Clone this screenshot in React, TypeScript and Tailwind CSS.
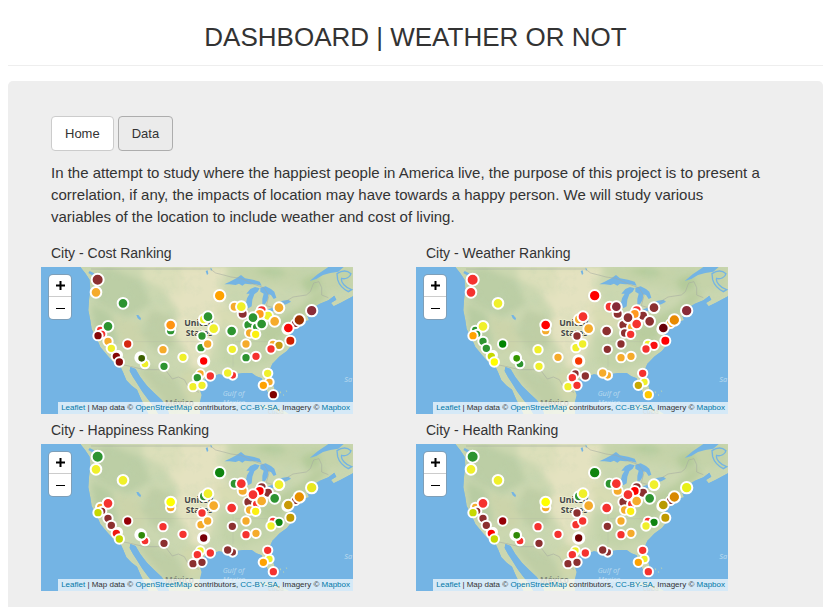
import React from "react";

type City = { x: number; y: number; r: number; c: [string, string, string, string] };

const M = "#8c3030";
const D = "#850808";
const R = "#f5322f";
const RR = "#ff0000";
const O = "#f5ab2b";
const OO = "#ffa200";
const Y = "#f0f02a";
const YG = "#c6d800";
const G = "#2d9430";

const city = (x: number, y: number, r: number, a: string, b: string, c: string, d: string): City => ({
  x,
  y,
  r,
  c: [a, b, c, d],
});

// One entry per city; the four colours are cost, weather, happiness and health.
const cities: City[] = [
  city(170, 38, 15, M, R, G, G),
  city(165, 76, 13, O, R, Y, Y),
  city(246, 109, 13, G, Y, Y, Y),
  city(178, 189, 10, R, G, O, O),
  city(183, 201, 10, R, G, M, M),
  city(201, 178, 13, G, Y, R, R),
  city(171, 206, 11, D, OO, YG, YG),
  city(201, 223, 11, O, G, M, M),
  city(211, 244, 11, Y, G, M, M),
  city(260, 231, 11, "#d62810", "#008400", "#960008", "#960008"),
  city(231, 264, 9, "#f8c8c8", "#dce89a", "#f8dcc8", "#f8b8b8"),
  city(226, 268, 11, D, YG, "#f01810", RR),
  city(235, 285, 11, D, "#ffff00", YG, YG),
  city(312, 291, 10, Y, G, R, R),
  city(299, 272, 13, "#ffffff", "#ffffff", "#ffffff", "#ffffff"),
  city(302, 274, 10, "#3c6000", "#359800", "#308a08", "#308a08"),
  city(389, 191, 11, G, O, O, O),
  city(389, 174, 13, "#ff9412", RR, "#ffff00", "#ffff00"),
  city(366, 248, 11, O, Y, R, R),
  city(369, 298, 11, G, Y, M, M),
  city(426, 271, 11, Y, O, R, R),
  city(536, 86, 14, OO, RR, "#108410", "#108410"),
  city(581, 119, 12, O, R, G, G),
  city(605, 140, 12, M, M, O, O),
  city(601, 119, 13, Y, "#862838", R, R),
  city(662, 130, 12, R, R, M, M),
  city(681, 146, 12, Y, M, M, M),
  city(656, 141, 12, "#ff9a20", "#ff9a20", RR, RR),
  city(714, 122, 13, O, M, Y, Y),
  city(701, 163, 13, O, M, G, G),
  city(812, 131, 14, "#8a2c38", "#8a2c38", "#e8e820", "#e8f018"),
  city(763, 170, 10, M, O, M, M),
  city(775, 159, 14, "#993000", "#e88a00", "#e89000", "#d88800"),
  city(738, 187, 11, "#f4c8cc", "#e8b8c0", "#a8d098", "#a8d098"),
  city(742, 183, 13, "#f80808", "#680008", "#c89a08", "#b89a00"),
  city(748, 221, 12, "#d02000", RR, "#c09a00", "#c09a00"),
  city(696, 231, 10, O, Y, R, R),
  city(714, 235, 11, "#c89a10", "#fa1010", "#108410", "#108410"),
  city(690, 246, 11, R, R, Y, Y),
  city(572, 192, 13, G, M, R, R),
  city(622, 174, 12, G, M, M, M),
  city(646, 180, 10, G, O, R, R),
  city(636, 152, 13, G, M, R, R),
  city(662, 171, 13, G, R, O, O),
  city(626, 198, 11, O, M, O, O),
  city(644, 202, 11, "#fcf010", R, "#fcf010", "#fcf010"),
  city(615, 231, 11, O, M, O, O),
  city(574, 247, 11, Y, M, M, M),
  city(615, 272, 11, G, O, R, R),
  city(645, 268, 11, R, O, O, O),
  city(489, 157, 12, Y, O, G, G),
  city(501, 149, 13, G, R, Y, Y),
  city(518, 185, 13, Y, O, O, O),
  city(483, 207, 11, G, M, R, M),
  city(480, 242, 11, G, Y, O, R),
  city(500, 231, 11, O, Y, O, R),
  city(488, 282, 14, "#ffffff", "#ffffff", "#ffffff", "#ffffff"),
  city(488, 282, 11, RR, "#f83800", "#780008", "#700000"),
  city(478, 320, 10, O, M, Y, Y),
  city(469, 332, 11, G, R, R, R),
  city(456, 359, 11, Y, Y, M, M),
  city(483, 355, 11, Y, R, M, M),
  city(508, 327, 11, R, M, R, R),
  city(575, 325, 10, R, O, M, M),
  city(560, 318, 11, Y, O, M, M),
  city(680, 319, 11, Y, R, R, R),
  city(685, 345, 10, O, Y, Y, Y),
  city(667, 355, 11, OO, "#c8a800", OO, OO),
  city(697, 383, 11, "#800000", "#ffc800", R, R),
];

const LAND =
  "M118 0 L134 20 L146 38 L148 66 L144 100 L142 130 L148 160 L152 186 L166 212 L178 240 L196 262 L216 284 L236 294 L246 316 L256 340 L272 356 L288 368 L300 396 L312 420 L322 441 L352 441 L340 420 L322 398 L304 374 L290 352 L276 330 L266 312 L268 300 L284 306 L298 330 L318 356 L340 378 L362 398 L378 420 L384 441 L478 441 L476 410 L482 384 L474 362 L486 340 L510 330 L534 322 L556 326 L574 338 L592 332 L582 322 L606 318 L632 318 L646 328 L662 334 L668 352 L680 376 L694 394 L702 386 L700 362 L688 336 L684 314 L694 290 L716 268 L738 252 L750 236 L744 214 L748 198 L762 178 L782 166 L804 160 L798 144 L814 124 L836 110 L862 100 L880 86 L886 98 L870 108 L878 118 L898 108 L936 88 L936 0 Z";

function BaseMap() {
  return (
    <g>
      <rect width="936" height="441" fill="#74b4e4" />
      <g clipPath="url(#land)">
        <path d={LAND} fill="#cbd7b0" />
        <g filter="url(#soft)">
          <path d="M390 0 L560 0 L540 60 L560 120 L530 190 L510 250 L490 310 L450 300 L430 240 L400 200 L410 130 L370 70 Z" fill="#e4e2c0" />
          <path d="M300 0 H420 V90 L360 60 L310 40 Z" fill="#dcdfba" />
          <path d="M150 20 L200 0 L300 40 L330 110 L260 150 L190 120 L160 100 Z" fill="#bccea5" />
          <path d="M150 110 L210 140 L230 230 L200 240 L160 190 Z" fill="#b8cca2" />
          <path d="M330 130 L400 150 L400 240 L350 260 L300 200 Z" fill="#bfcea5" />
          <path d="M220 150 L300 170 L310 250 L250 250 Z" fill="#ccd4aa" />
          <path d="M330 300 L400 330 L440 400 L400 441 L340 370 L290 310 Z" fill="#bfcea5" />
          <path d="M540 210 L640 200 L740 210 L700 280 L600 310 L540 290 Z" fill="#c3d3a9" />
          <path d="M640 190 L720 150 L780 120 L840 60 L860 90 L760 170 L690 240 Z" fill="#bacd9f" />
          <path d="M560 0 L936 0 L936 60 L820 80 L740 60 L600 50 Z" fill="#c5d3a9" />
          <path d="M520 110 L620 150 L610 190 L540 190 Z" fill="#d8dcb3" />
          <path d="M420 320 L470 300 L480 390 L440 400 Z" fill="#d0d7ab" />
          <path d="M630 10 L700 30 L740 20 L700 0 Z M780 40 L830 20 L840 60 L800 80 Z" fill="#b3cb9a" />
        </g>
        <rect width="936" height="441" filter="url(#relief)" opacity="0.22" />
      </g>
      <g fill="#74b4e4">
        <path d="M550 52 L566 44 L586 34 L600 24 L612 34 L636 38 L656 44 L662 56 L644 52 L628 52 L612 50 L604 56 L594 50 L584 54 L566 52 Z" />
        <path d="M628 66 L642 60 L656 64 L650 74 L640 82 L634 98 L632 118 L622 124 L614 112 L618 94 L626 80 L616 80 Z" />
        <path d="M658 62 L674 58 L690 66 L700 74 L706 92 L698 96 L690 84 L682 82 L680 98 L672 112 L664 112 L664 96 L668 80 L658 74 Z" />
        <path d="M666 136 L684 126 L706 118 L718 112 L712 124 L692 134 L676 142 Z" />
        <path d="M708 112 L722 102 L742 98 L750 104 L736 112 L718 116 Z" />
        <path d="M286 144 L292 144 L300 154 L298 160 L290 154 Z" />
        <path d="M146 12 L158 18 L166 30 L160 34 L152 24 L142 18 Z" />
        <path d="M806 42 L830 22 L850 8 L862 0 L908 0 L892 14 L868 18 L846 24 L826 36 Z" />
        <path d="M494 12 L500 10 L502 20 L498 24 Z M508 2 L514 6 L510 12 Z" />
      </g>
      <path
        d="M888 20 C900 12 916 8 930 20 C928 30 914 38 902 34 C898 46 914 62 932 68 L922 74 C906 66 894 52 890 38 Z"
        fill="#c2d3a8"
        stroke="#74b4e4"
        strokeWidth="4"
      />
      <g fill="none" stroke="#a5a9a0" strokeWidth="2" opacity="0.8">
        <path d="M150 6 H508 L524 18 L548 24 L570 30 L600 34 L640 52 L668 62 L684 86 L676 116 L704 124 L740 100 L756 90 L796 84 L808 74 L818 48 L834 44 L842 62 L842 84 L862 92" />
        <path d="M238 292 L268 298 L310 308 H350 L374 310 L394 336 L412 330 L430 338 L444 364 L474 376" />
        <path d="M280 224 H480 M576 200 V300 M582 224 H740" opacity="0.35" />
      </g>
      <g fill="#b9d3b3">
        <path d="M716 372 l5 3 -3 5z M726 380 l4 5 -3 2z M734 370 l5 2 -2 4z" />
        <path d="M640 426 L664 414 L696 416 L730 432 L744 441 H718 L694 428 L666 424 Z" />
      </g>
      <g fontFamily='"Noto Sans", "Open Sans", sans-serif'>
        <g fontWeight="700" fontSize="26" fill="#44464a" stroke="#eceecf" strokeWidth="4" paintOrder="stroke">
          <text x="430" y="177">United</text>
          <text x="434" y="206">States</text>
        </g>
        <text x="372" y="418" fontSize="25" fill="#7d867a" fontWeight="600">México</text>
        <g fontSize="22" fontStyle="italic" fill="#b6d8ee">
          <text x="545" y="386">Gulf of</text>
          <text x="545" y="413">Mexico</text>
          <text x="910" y="344">Sa</text>
        </g>
        <text x="680" y="440" fontSize="20" fill="#7f9192">Cuba</text>
      </g>
    </g>
  );
}

function RankingMap({ title, layer }: { title: string; layer: number }) {
  return (
    <section className="pb-1.5">
      <h2 className="pl-[10px] text-sm leading-5">{title}</h2>
      <div className="relative mt-1 w-[312px] overflow-hidden">
        <svg viewBox="0 0 936 441" className="block w-full" role="img" aria-label={title}>
          <defs>
            <clipPath id="land">
              <path d={LAND} />
            </clipPath>
            <filter id="soft">
              <feGaussianBlur stdDeviation="10" />
            </filter>
            <filter id="relief" x="0" y="0" width="100%" height="100%">
              <feTurbulence type="fractalNoise" baseFrequency="0.025" numOctaves="4" seed="8" />
              <feColorMatrix values="0 0 0 0 0.52  0 0 0 0 0.66  0 0 0 0 0.44  3 0 0 0 -1.4" />
            </filter>
          </defs>
          <BaseMap />
          {cities.map((c, i) => (
            <circle key={i} cx={c.x} cy={c.y} r={c.r + 3} fill={c.c[layer]} stroke="#fff" strokeWidth="6" />
          ))}
        </svg>
        <div className="absolute left-2 top-2 flex flex-col rounded-[4px] bg-white text-black shadow-[0_0_0_1px_#7f9fb8]">
          <button type="button" aria-label="Zoom in" className="flex h-[22px] w-[22px] items-center justify-center border-b border-[#ccc]">
            <svg viewBox="0 0 9 9" className="size-[9px]">
              <path d="M0 4.5H9M4.5 0V9" stroke="currentColor" strokeWidth="2" />
            </svg>
          </button>
          <button type="button" aria-label="Zoom out" className="flex h-[22px] w-[22px] items-center justify-center">
            <svg viewBox="0 0 9 9" className="size-[9px]">
              <path d="M0 4.5H9" stroke="currentColor" strokeWidth="1" />
            </svg>
          </button>
        </div>
        <p className="absolute bottom-0 right-0 whitespace-nowrap bg-white/70 px-[3px] text-[8px] leading-3 text-[#333] [&>a]:text-[#0078a8]">
          <a href="#leaflet">Leaflet</a> | Map data © <a href="#osm">OpenStreetMap</a> contributors,{" "}
          <a href="#license">CC-BY-SA</a>, Imagery © <a href="#mapbox">Mapbox</a>
        </p>
      </div>
    </section>
  );
}

const maps = ["City - Cost Ranking", "City - Weather Ranking", "City - Happiness Ranking", "City - Health Ranking"];

export default function App() {
  return (
    <div className='min-h-screen bg-white pl-2 pr-[17px] font-["Liberation_Sans",Arial,sans-serif] text-[#333]'>
      <header className="border-b border-[#eee] pb-3 pt-[21px] text-center">
        <h1 className="text-[26px] leading-8">DASHBOARD | WEATHER OR NOT</h1>
      </header>
      <main className="mt-[15px] rounded-t-[5px] bg-[#eee] pb-4 pl-[33px] pr-8 pt-[35px]">
        <nav className="flex gap-1 pl-[10px] text-[13px]">
          <button type="button" className="h-[35px] rounded-[4px] border border-[#ccc] bg-white px-[13px]">
            Home
          </button>
          <button type="button" className="h-[35px] rounded-[4px] border border-[#adadad] bg-[#ebebeb] px-[13px]">
            Data
          </button>
        </nav>
        <p className="mt-[11px] pl-[10px] pr-7 text-[15px] leading-[22px]">
          In the attempt to study where the happiest people in America live, the purpose of this project is to present a
          correlation, if any, the impacts of location may have towards a happy person. We will study various variables
          of the location to include weather and cost of living.
        </p>
        <div className="mt-[15px] grid grid-cols-2">
          {maps.map((title, i) => (
            <RankingMap key={title} title={title} layer={i} />
          ))}
        </div>
      </main>
    </div>
  );
}
